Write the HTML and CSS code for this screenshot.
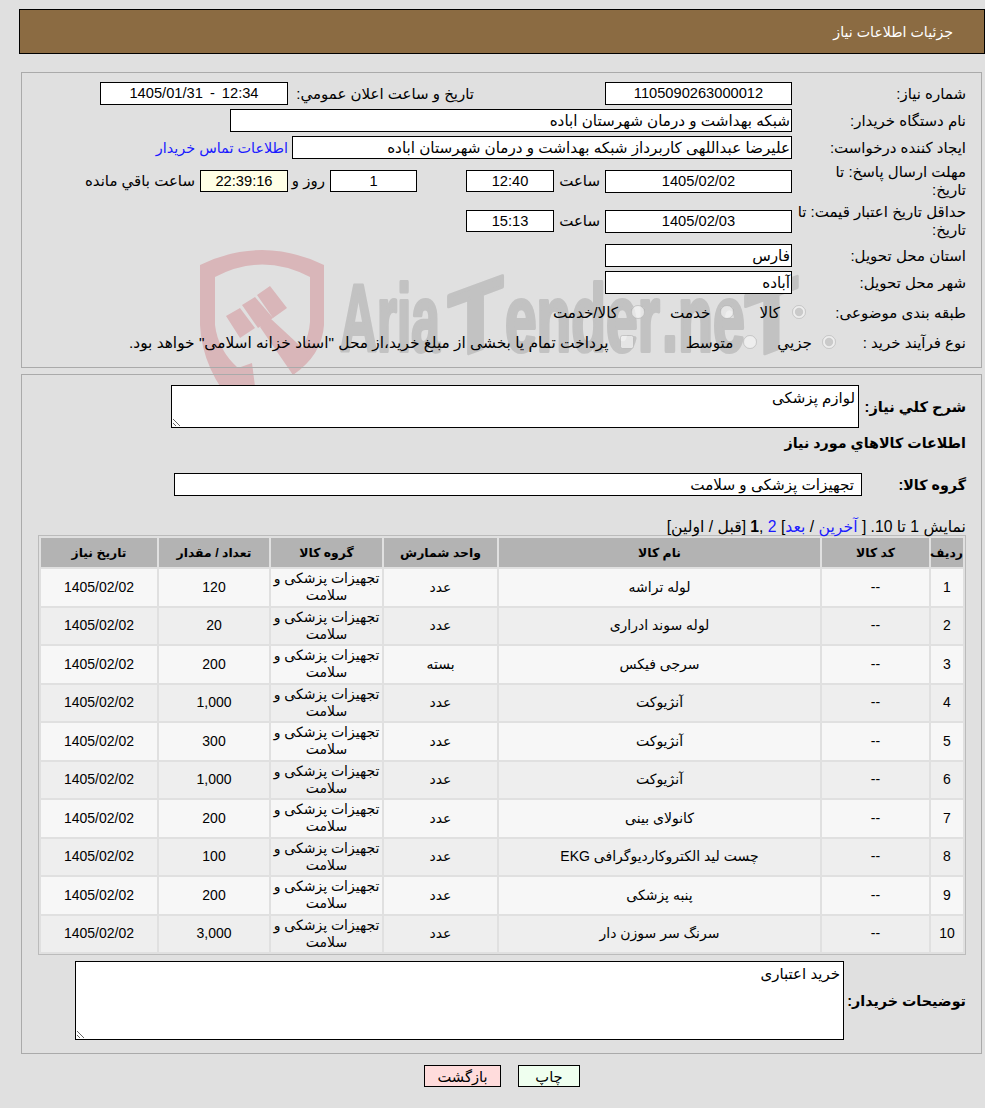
FILE: index.html
```html
<!DOCTYPE html>
<html lang="fa" dir="rtl">
<head>
<meta charset="utf-8">
<title>جزئیات اطلاعات نیاز</title>
<link rel="stylesheet" href="styles.css">
</head>
<body>
<div class="page">
  <svg class="watermark" viewBox="0 0 660 160" aria-hidden="true">
    <path class="wm-shield" fill-rule="evenodd" d="M0 15 Q62 -15 124 15 L124 75 Q122 105 93 125 L88 115 Q108 98 110 72 L110 27 Q62 2 15 27 L15 75 Q18 100 38 118 L52 113 L58 160 L38 160 Q2 120 0 75 Z"/>
    <path class="wm-shield" d="M26 66 L40 58 L55 78 L40 88 Z M42 55 L55 47 L73 68 L58 78 Z M57 45 L70 36 L87 58 L73 68 Z M60 77 L70 68 L110 105 L93 125 Z"/>
    <text class="wm-text" transform="translate(140 101) scale(.546 1)">Aria</text>
    <text class="wm-text" transform="translate(275 101) skewY(-20) translate(-27 0) scale(.96 1)">T</text>
    <text class="wm-text" transform="translate(305 101) scale(.605 1)">ender</text>
    <text class="wm-text" transform="translate(462 101) scale(.61 1)">.ne</text>
    <text class="wm-text" transform="translate(571 101) skewY(-20) translate(-26 0) scale(.92 1)">T</text>
  </svg>

  <header class="title-bar">جزئیات اطلاعات نیاز</header>

  <section class="panel panel-info">
    <div class="row">
      <div class="label">شماره نیاز:</div>
      <div class="field field-date num">1105090263000012</div>
      <div class="text announce-label">تاریخ و ساعت اعلان عمومي:</div>
      <div class="field field-announce num">12:34 - 1405/01/31</div>
    </div>
    <div class="row">
      <div class="label">نام دستگاه خریدار:</div>
      <div class="field field-buyer">شبکه بهداشت و درمان شهرستان اباده</div>
    </div>
    <div class="row">
      <div class="label">ایجاد کننده درخواست:</div>
      <div class="field field-creator">علیرضا عبداللهی کاربرداز شبکه بهداشت و درمان شهرستان اباده</div>
      <a class="contact" href="#">اطلاعات تماس خریدار</a>
    </div>
    <div class="row row-tall">
      <div class="label label-wrap">مهلت ارسال پاسخ: تا<br>تاریخ:</div>
      <div class="field field-date num">1405/02/02</div>
      <div class="text time-label">ساعت</div>
      <div class="field field-time num">12:40</div>
      <div class="field field-day num">1</div>
      <div class="text day-label">روز و</div>
      <div class="field field-time field-remain num">22:39:16</div>
      <div class="text remain-label">ساعت باقي مانده</div>
    </div>
    <div class="row row-tall">
      <div class="label label-wrap">حداقل تاریخ اعتبار قیمت: تا<br>تاریخ:</div>
      <div class="field field-date num">1405/02/03</div>
      <div class="text time-label">ساعت</div>
      <div class="field field-time num">15:13</div>
    </div>
    <div class="row row-province">
      <div class="label">استان محل تحویل:</div>
      <div class="field field-date">فارس</div>
    </div>
    <div class="row">
      <div class="label">شهر محل تحویل:</div>
      <div class="field field-date">آباده</div>
    </div>
    <div class="row row-choice row-choice-first">
      <div class="label label-cat">طبقه بندی موضوعی:</div>
      <input class="choice" type="radio" name="cat" checked disabled>
      <span class="opt opt-cat1">کالا</span>
      <input class="choice" type="radio" name="cat" disabled>
      <span class="opt opt-cat2">خدمت</span>
      <input class="choice" type="radio" name="cat" disabled>
      <span class="opt opt-cat3">کالا/خدمت</span>
    </div>
    <div class="row row-choice">
      <div class="label label-proc">نوع فرآیند خرید :</div>
      <input class="choice" type="radio" name="proc" checked disabled>
      <span class="opt opt-proc1">جزيي</span>
      <input class="choice" type="radio" name="proc" disabled>
      <span class="opt opt-proc2">متوسط</span>
      <input class="choice" type="checkbox" disabled>
      <span class="opt opt-proc3">پرداخت تمام یا بخشی از مبلغ خرید،از محل "اسناد خزانه اسلامی" خواهد بود.</span>
    </div>
  </section>

  <section class="panel panel-goods">
    <div class="row row-desc">
      <div class="strong desc-label">شرح کلي نیاز:</div>
      <textarea class="area area-desc" readonly>لوازم پزشکی</textarea>
    </div>
    <h2 class="strong heading">اطلاعات کالاهاي مورد نیاز</h2>
    <div class="row row-group">
      <div class="strong group-label">گروه کالا:</div>
      <div class="field field-group">تجهیزات پزشکی و سلامت</div>
    </div>
    <div class="pager">نمایش 1 تا 10. [ <a href="#">آخرین</a> / <a href="#">بعد</a>] <a href="#">2</a> ,<b>1</b> [قبل / اولین]</div>
    <table class="goods">
      <colgroup>
        <col class="c-idx"><col class="c-code"><col class="c-name"><col class="c-unit"><col class="c-cat"><col class="c-qty"><col class="c-date">
      </colgroup>
      <thead>
        <tr><th>ردیف</th><th>کد کالا</th><th>نام کالا</th><th>واحد شمارش</th><th>گروه کالا</th><th>تعداد / مقدار</th><th>تاریخ نیاز</th></tr>
      </thead>
      <tbody>
        <tr><td>1</td><td>--</td><td>لوله تراشه</td><td>عدد</td><td>تجهیزات پزشکی و سلامت</td><td>120</td><td>1405/02/02</td></tr>
        <tr><td>2</td><td>--</td><td>لوله سوند ادراری</td><td>عدد</td><td>تجهیزات پزشکی و سلامت</td><td>20</td><td>1405/02/02</td></tr>
        <tr><td>3</td><td>--</td><td>سرجی فیکس</td><td>بسته</td><td>تجهیزات پزشکی و سلامت</td><td>200</td><td>1405/02/02</td></tr>
        <tr><td>4</td><td>--</td><td>آنژیوکت</td><td>عدد</td><td>تجهیزات پزشکی و سلامت</td><td>1,000</td><td>1405/02/02</td></tr>
        <tr><td>5</td><td>--</td><td>آنژیوکت</td><td>عدد</td><td>تجهیزات پزشکی و سلامت</td><td>300</td><td>1405/02/02</td></tr>
        <tr><td>6</td><td>--</td><td>آنژیوکت</td><td>عدد</td><td>تجهیزات پزشکی و سلامت</td><td>1,000</td><td>1405/02/02</td></tr>
        <tr><td>7</td><td>--</td><td>کانولای بینی</td><td>عدد</td><td>تجهیزات پزشکی و سلامت</td><td>200</td><td>1405/02/02</td></tr>
        <tr><td>8</td><td>--</td><td>چست لید الکتروکاردیوگرافی EKG</td><td>عدد</td><td>تجهیزات پزشکی و سلامت</td><td>100</td><td>1405/02/02</td></tr>
        <tr><td>9</td><td>--</td><td>پنبه پزشکی</td><td>عدد</td><td>تجهیزات پزشکی و سلامت</td><td>200</td><td>1405/02/02</td></tr>
        <tr><td>10</td><td>--</td><td>سرنگ سر سوزن دار</td><td>عدد</td><td>تجهیزات پزشکی و سلامت</td><td>3,000</td><td>1405/02/02</td></tr>
      </tbody>
    </table>
    <div class="row row-notes">
      <div class="strong notes-label">توضیحات خریدار:</div>
      <textarea class="area area-notes" readonly>خرید اعتباری</textarea>
    </div>
  </section>

  <div class="actions">
    <button class="btn btn-print" type="button">چاپ</button>
    <button class="btn btn-back" type="button">بازگشت</button>
  </div>
</div>
</body>
</html>
```
FILE: styles.css
```css
html, body {
  margin: 0;
  padding: 0;
  background: #e0e0e0;
}
body {
  font-family: "Liberation Sans", "DejaVu Sans", sans-serif;
  font-size: 14.67px;
  color: #000;
}
.page {
  position: relative;
  height: 1108px;
  overflow: hidden;
  padding-top: 9px;
  box-sizing: border-box;
}
.watermark {
  position: absolute;
  left: 200px;
  top: 250px;
  width: 660px;
  height: 160px;
  overflow: visible;
  direction: ltr;
}
.wm-shield { fill: #d9b6b9; }
.wm-text {
  direction: ltr;
  fill: #c2c2c2;
  stroke: #c2c2c2;
  stroke-width: 4px;
  stroke-linejoin: round;
  font-family: "Liberation Sans", sans-serif;
  font-weight: 700;
  font-size: 94px;
}
.title-bar {
  position: relative;
  box-sizing: border-box;
  height: 45px;
  margin-left: 19px;
  padding-right: 31px;
  background: #8b6b42;
  border: 1px solid #000;
  color: #fff;
  font-size: 14.2px;
  line-height: 44px;
}
.panel {
  position: relative;
  box-sizing: border-box;
  margin: 0 3px 0 21px;
  border: 1px solid #aaa;
  padding-right: 15px;
}
.panel-info {
  height: 296px;
  margin-top: 18px;
  padding-top: 9px;
}
.panel-goods {
  height: 680px;
  margin-top: 6px;
  padding-top: 10px;
}
.row {
  display: flex;
  align-items: center;
  min-height: 23px;
  margin-bottom: 4px;
}
.row-tall { height: 36px; }
.row-province { margin-top: 5px; }
.row-choice { height: 26px; }
.row-choice-first { margin-top: 6px; }
.label {
  box-sizing: border-box;
  flex: none;
  width: 174px;
  padding-left: 4px;
  font-size: 15px;
  line-height: 18px;
}
.label-wrap { padding-left: 0; white-space: nowrap; }
.label-cat { width: 160px; }
.label-proc { width: 130px; }
.field {
  flex: none;
  box-sizing: border-box;
  height: 23px;
  border: 1px solid #000;
  background: #fff;
  font-size: 15.2px;
  line-height: 21px;
  padding: 0 1px;
  white-space: nowrap;
  overflow: hidden;
}
.num { text-align: center; font-size: 14.67px; }
.field-date { width: 187px; }
.field-announce { width: 188px; margin-right: 5px; word-spacing: 3px; }
.field-buyer { width: 562px; }
.field-creator { width: 500px; }
.field-time { width: 88px; margin-right: 4px; height: 22px; }
.field-day { width: 87px; margin-right: 49px; height: 22px; }
.field-remain { background: #ffffe6; margin-right: 5px; }
.field-group { width: 688px; padding: 0 7px; }
.text { flex: none; white-space: nowrap; font-size: 15px; }
.announce-label { margin-right: 131px; width: 181px; }
.time-label { margin-right: 5px; width: 42px; }
.day-label { margin-right: 5px; width: 32px; }
.remain-label { margin-right: 5px; }
.contact { margin-right: 4px; color: #1a1aff; text-decoration: none; font-size: 14.4px; }
.choice { margin: -2px 0 0; flex: none; width: 14px; height: 14px; }
.opt { flex: none; font-size: 15.2px; }
.opt-cat1 { margin-right: 12px; margin-left: 25px; }
.opt-cat2 { margin-right: 10px; margin-left: 25px; }
.opt-cat3 { margin-right: 13px; }
.opt-proc1 { margin-right: 10px; margin-left: 20px; }
.opt-proc2 { margin-right: 10px; margin-left: 52px; }
.opt-proc3 { margin-right: 11px; font-size: 15.4px; }
.strong {
  font-weight: 700;
  font-size: 14.3px;
}
.row-desc { height: 43px; margin-bottom: 0; }
.desc-label { width: 107px; flex: none; font-size: 14.6px; }
.area {
  box-sizing: border-box;
  flex: none;
  display: block;
  border: 1px solid #000;
  border-radius: 0;
  background: #fff;
  padding: 3px 3px 1px;
  font-family: "Liberation Sans", "DejaVu Sans", sans-serif;
  font-size: 15px;
  color: #000;
  outline: none;
}
.area-desc { width: 688px; height: 43px; }
.heading {
  margin: 6px 0 0;
  height: 18px;
  line-height: 18px;
}
.row-group { margin: 21px 0 0; }
.group-label { width: 104px; flex: none; }
.pager {
  margin: 22px 0 0;
  font-size: 15.7px;
  line-height: 17px;
}
.pager a { color: #1a1aff; text-decoration: none; }
.goods {
  table-layout: fixed;
  width: 928px;
  margin-top: 0;
  border: 1px solid #bbb;
  border-spacing: 2px;
  font-size: 14px;
}
.c-idx { width: 32px; }
.c-code { width: 107px; }
.c-name { width: 321px; }
.c-unit { width: 113px; }
.c-cat { width: 111px; }
.c-qty { width: 110px; }
.c-date { width: 116px; }
.goods th {
  height: 29px;
  padding: 0;
  background: #b3b3b3;
  font-size: 12.4px;
  font-weight: 700;
}
.goods td {
  height: 36.5px;
  padding: 0 2px;
  text-align: center;
  line-height: 17px;
}
.goods tbody tr:nth-child(odd) td { background: #f7f7f7; }
.goods tbody tr:nth-child(even) td { background: #eee; }
.row-notes { margin: 6px 0 0; height: 79px; }
.notes-label { width: 122px; flex: none; }
.area-notes { width: 769px; height: 79px; }
.actions {
  position: relative;
  display: flex;
  gap: 17px;
  margin-top: 11px;
  padding-right: 405px;
}
.btn {
  box-sizing: border-box;
  height: 22px;
  margin: 0;
  padding: 0;
  border: 1px solid #000;
  border-radius: 0;
  font-family: "Liberation Sans", "DejaVu Sans", sans-serif;
  font-size: 14.67px;
  color: #000;
}
.btn-print { width: 62px; background: #efffef; }
.btn-back { width: 77px; background: #ffdcdc; }
```
